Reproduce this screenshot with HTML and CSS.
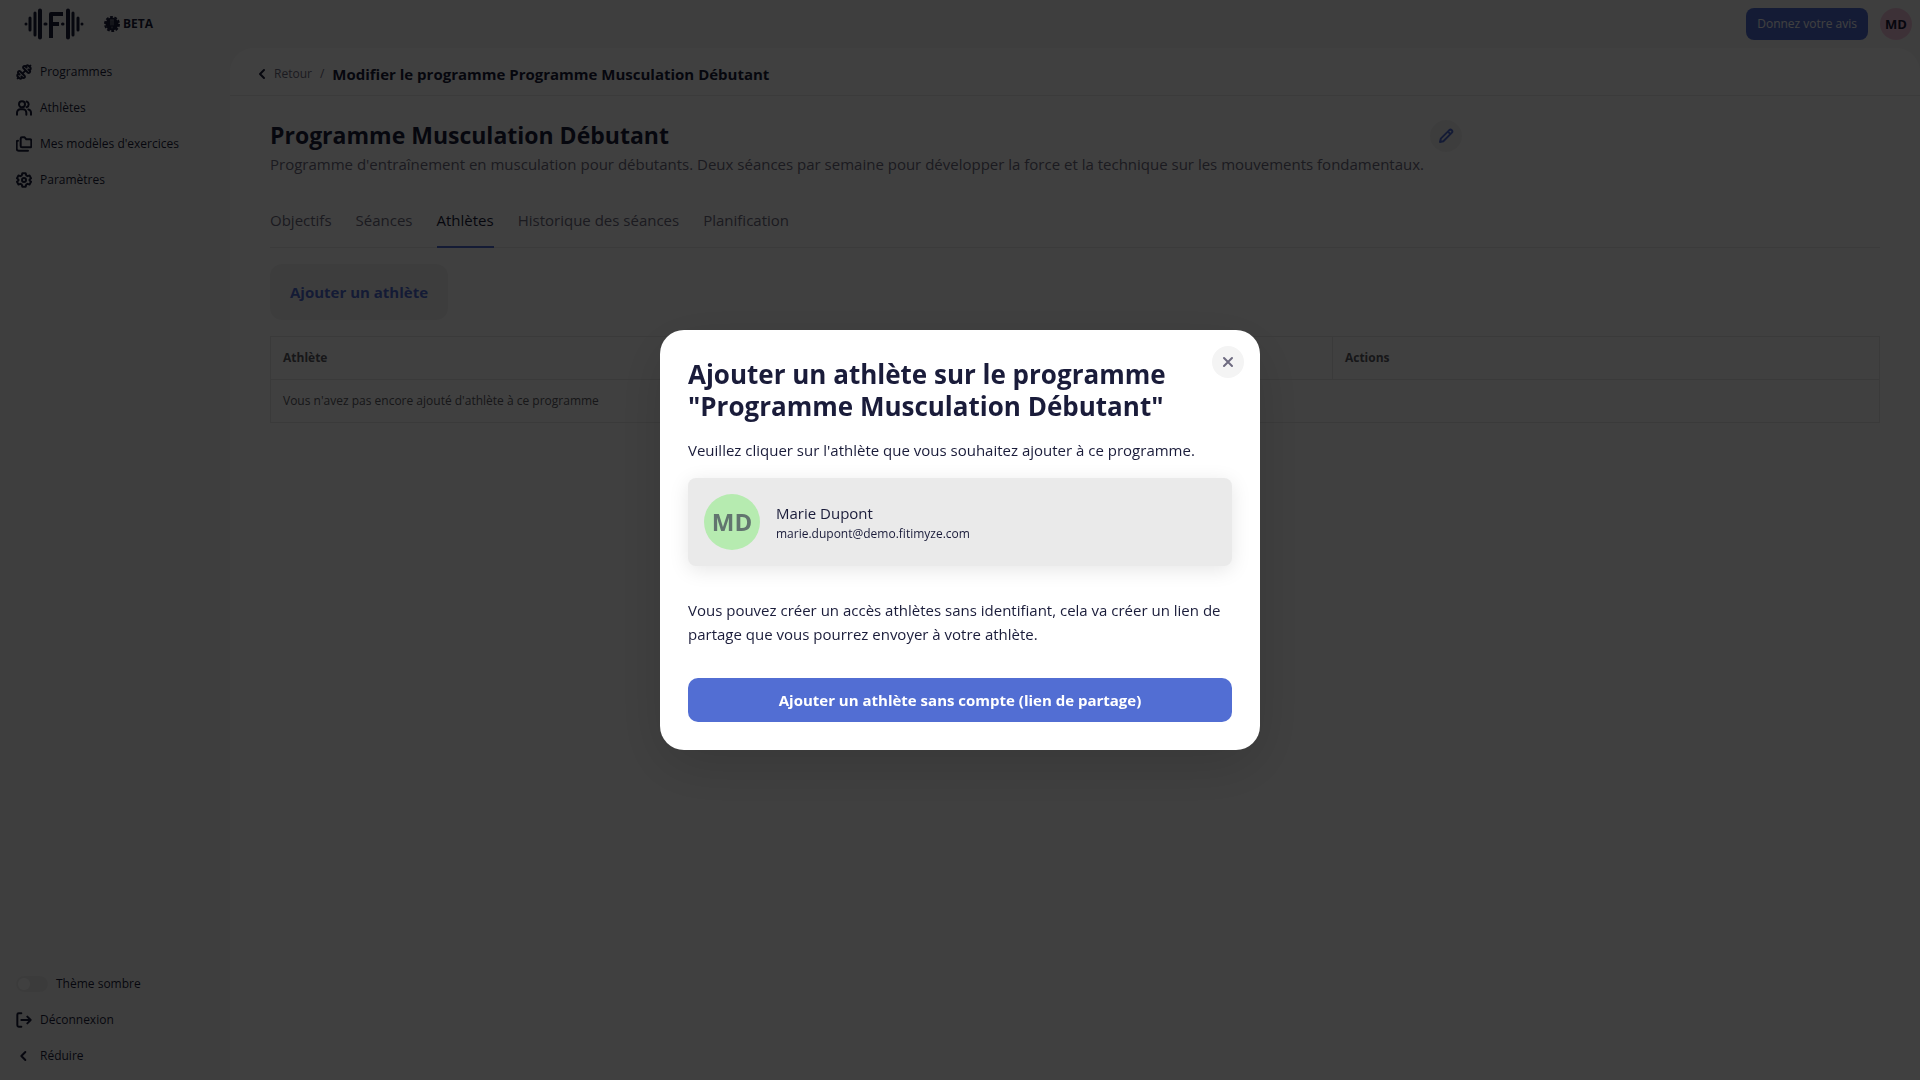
FILE: index.html
```
<!DOCTYPE html>
<html lang="fr">
<head>
<meta charset="utf-8">
<title>Modifier le programme</title>
<meta name="viewport" content="width=device-width, initial-scale=1">
<link rel="stylesheet" href="styles.css">
</head>
<body>
<div class="app">
  <header class="topbar">
    <a class="brand" href="#" aria-label="Accueil">
      <svg class="logo" viewBox="0 0 60 32" fill="none" stroke="currentColor" stroke-linecap="round">
        <path stroke-width="3" d="M2 16h0M58 16h0M21 16h1M38.500 16h.5"/>
        <path stroke-width="3" d="M6 10v12M11 5v22M49 5v22M54 10v12"/>
        <path stroke-width="4" d="M16 2.500v27M44 2.500v27"/>
        <path stroke-width="4" stroke-linecap="butt" d="M27 30V6h12M27 16h8"/>
      </svg>
    </a>
    <span class="beta">
      <svg class="beta-icon" viewBox="0 0 16 16"><circle cx="8" cy="8" r="6.500" fill="currentColor"/><circle cx="8" cy="8" r="7" fill="none" stroke="currentColor" stroke-width="2" stroke-linecap="butt" stroke-dasharray="2.800 1.600"/><path d="M6.500 4h3M7 5v4M9 5v4M8 11v1" stroke="#f8f8f8" stroke-width="1" opacity=".5"/></svg>
      BETA
    </span>
    <button class="feedback" type="button">Donnez votre avis</button>
    <button class="avatar avatar-small" type="button">MD</button>
  </header>

  <nav class="sidebar" aria-label="Navigation principale">
    <ul class="menu">
      <li><a href="#"><svg class="icon" viewBox="0 0 24 24"><path d="M14.400 14.400 9.600 9.600M18.657 21.485a2 2 0 1 1-2.829-2.828l-1.767 1.768a2 2 0 1 1-2.829-2.829l6.364-6.364a2 2 0 1 1 2.829 2.829l-1.768 1.767a2 2 0 1 1 2.828 2.829zM21.500 21.500l-1.400-1.400M3.900 3.900 2.500 2.500M6.404 12.768a2 2 0 1 1-2.829-2.829l1.768-1.767a2 2 0 1 1-2.828-2.829l2.828-2.828a2 2 0 1 1 2.829 2.828l1.767-1.768a2 2 0 1 1 2.829 2.829z" transform="matrix(-1 0 0 1 24 0)"/></svg>Programmes</a></li>
      <li><a href="#"><svg class="icon" viewBox="0 0 24 24"><path d="M1.500 22v-3a5 5 0 0 1 5-5h4a5 5 0 0 1 5 5v3M22.500 22v-3a5 5 0 0 0-4-4.900M16 2.300a4.500 4.500 0 0 1 0 8.500"/><circle cx="9" cy="6.500" r="4.500"/></svg>Athlètes</a></li>
      <li><a href="#"><svg class="icon" viewBox="0 0 24 24"><path d="M9 2h4l2.500 3H21a2 2 0 0 1 2 2v8a2 2 0 0 1-2 2H9a2 2 0 0 1-2-2V4a2 2 0 0 1 2-2zM3 7a2 2 0 0 0-2 2v10a3 3 0 0 0 3 3h14"/></svg>Mes modèles d'exercices</a></li>
      <li><a href="#"><svg class="icon" viewBox="0 0 24 24"><path d="M9.500 2h5l.8 3 2 1.200 3-.9 2.200 4-2.200 2.200v1l2.200 2.200-2.200 4-3-.9-2 1.200-.8 3h-5l-.8-3-2-1.200-3 .9-2.200-4 2.200-2.200v-1L1.500 9.300l2.200-4 3 .9 2-1.200z"/><circle cx="12" cy="12" r="3"/></svg>Paramètres</a></li>
    </ul>
    <ul class="menu">
      <li><label class="theme"><input class="switch" type="checkbox" role="switch">Thème sombre</label></li>
      <li><a href="#"><svg class="icon" viewBox="0 0 24 24"><path d="M8 2H4a2 2 0 0 0-2 2v16a2 2 0 0 0 2 2h4M8 12h14M17 7l5 5-5 5"/></svg>Déconnexion</a></li>
      <li><a href="#"><svg class="icon" viewBox="0 0 24 24"><path d="m14 6-6 6 6 6"/></svg>Réduire</a></li>
    </ul>
  </nav>

  <main class="panel">
    <div class="crumbs">
      <a class="back" href="#"><svg class="chevron" viewBox="0 0 8 12"><path d="M6 2 2 6l4 4"/></svg>Retour</a>
      <span class="slash">/</span>
      <strong class="current">Modifier le programme Programme Musculation Débutant</strong>
    </div>
    <div class="content">
      <div class="intro">
        <div>
          <h1 class="title">Programme Musculation Débutant</h1>
          <p class="description">Programme d'entraînement en musculation pour débutants. Deux séances par semaine pour développer la force et la technique sur les mouvements fondamentaux.</p>
        </div>
        <button class="edit" type="button" aria-label="Modifier"><svg class="icon" viewBox="0 0 24 24"><path d="m3 21 1.200-5L17 3.200a2.700 2.700 0 0 1 3.800 3.800L8 19.800zM15 5.500 18.500 9"/></svg></button>
      </div>
      <nav class="tabs" aria-label="Sections du programme">
        <a href="#">Objectifs</a><a href="#">Séances</a><a class="active" href="#">Athlètes</a><a href="#">Historique des séances</a><a href="#">Planification</a>
      </nav>
      <button class="add" type="button">Ajouter un athlète</button>
      <table class="athletes">
        <thead><tr><th class="wide">Athlète</th><th>Actions</th></tr></thead>
        <tbody><tr><td colspan="2">Vous n'avez pas encore ajouté d'athlète à ce programme</td></tr></tbody>
      </table>
    </div>
  </main>
</div>

<div class="overlay">
  <section class="modal" role="dialog" aria-modal="true" aria-labelledby="modal-title">
    <button class="close" type="button" aria-label="Fermer"><svg class="cross" viewBox="0 0 12 12"><path d="m2 2 8 8M10 2l-8 8"/></svg></button>
    <h2 class="modal-title" id="modal-title">Ajouter un athlète sur le programme "Programme Musculation Débutant"</h2>
    <p class="modal-text">Veuillez cliquer sur l'athlète que vous souhaitez ajouter à ce programme.</p>
    <button class="person" type="button">
      <span class="avatar avatar-large">MD</span>
      <span class="identity"><span class="name">Marie Dupont</span><span class="email">marie.dupont@demo.fitimyze.com</span></span>
    </button>
    <p class="modal-text">Vous pouvez créer un accès athlètes sans identifiant, cela va créer un lien de partage que vous pourrez envoyer à votre athlète.</p>
    <button class="share" type="button">Ajouter un athlète sans compte (lien de partage)</button>
  </section>
</div>
</body>
</html>
```
FILE: styles.css
```
* { box-sizing: border-box; margin: 0; padding: 0; }
body { font: 15px/24px "Open Sans", "Noto Sans", sans-serif; color: #1a1c3a; background: #f8f8f8; }
button { font: inherit; border: 0; cursor: pointer; }
a { color: inherit; text-decoration: none; }
ul { list-style: none; }
svg { display: block; flex: none; fill: none; stroke: currentColor; stroke-linecap: round; stroke-linejoin: round; }

.app { display: grid; grid-template: 48px 1fr / 230px 1fr; min-height: 100vh; }
.topbar { grid-column: 1 / -1; display: flex; align-items: center; padding: 0 8px 0 24px; }
.logo { width: 60px; height: 32px; }
.beta { display: flex; align-items: center; gap: 3px; margin: 0 auto 0 20px; font-size: 12px; font-weight: 700; }
.beta-icon { width: 16px; height: 16px; stroke: none; }
.feedback { height: 32px; padding: 0 11px; border-radius: 8px; background: #526ed3; color: #fff; font-size: 12px; }
.avatar { display: grid; place-items: center; flex: none; border-radius: 50%; font-weight: 700; }
.avatar-small { width: 32px; height: 32px; margin-left: 12px; background: #f4c4dc; color: #1a1c3a; font-size: 13px; }
.avatar-large { width: 56px; height: 56px; background: #b6ebb0; color: #62756f; font-size: 24px; }

.sidebar { display: flex; flex-direction: column; justify-content: space-between; padding: 6px 16px; font-size: 12px; }
.menu a, .theme { display: flex; align-items: center; gap: 8px; height: 36px; }
.icon { width: 16px; height: 16px; stroke-width: 3; }
.switch { appearance: none; display: flex; width: 32px; height: 16px; padding: 2px; border-radius: 8px; background: #ececec; }
.switch::before { content: ""; width: 12px; height: 12px; border-radius: 50%; background: #fff; }

.panel { background: #fff; border-radius: 24px 24px 0 0; min-width: 0; }
.crumbs { display: flex; align-items: center; height: 48px; padding: 4px 28px 0; border-bottom: 1px solid #ececec; }
.back { display: flex; align-items: center; gap: 8px; color: #6e6b80; font-size: 12px; }
.chevron { width: 8px; height: 12px; stroke-width: 2; color: #1a1c3a; }
.slash { margin: 0 8px; color: #6e6b80; font-size: 12px; }
.content { padding: 24px 40px; }
.intro { display: flex; align-items: flex-start; gap: 6px; }
.title { margin-bottom: 2px; font-size: 23px; line-height: 30px; }
.description { color: #6e6b80; }
.edit { display: grid; place-items: center; width: 32px; height: 32px; border-radius: 50%; background: #f4f4f4; color: #526ed3; }
.tabs { display: flex; gap: 24px; margin: 18px 0 16px; border-bottom: 1px solid #ececec; color: #6e6b80; }
.tabs a { padding: 14px 0; border-bottom: 2px solid transparent; margin-bottom: -1px; }
.tabs .active { color: #1a1c3a; border-color: #526ed3; }
.add { height: 56px; padding: 0 20px; border-radius: 12px; background: #f4f4f4; color: #526ed3; font-weight: 700; }
.athletes { width: 100%; margin-top: 16px; border-collapse: collapse; font-size: 12px; color: #5c5c64; }
.athletes th, .athletes td { height: 43px; padding: 0 12px; border: 1px solid #e8e8e8; text-align: left; }
.wide { width: 66%; }

.overlay { position: fixed; inset: 0; display: grid; place-items: center; background: rgba(0, 0, 0, .75); }
.modal { position: relative; width: 600px; max-width: 100%; padding: 28px; border-radius: 24px; background: #fff; box-shadow: 0 16px 56px rgba(0, 0, 0, .15); }
.close { position: absolute; top: 16px; right: 16px; display: grid; place-items: center; width: 32px; height: 32px; border-radius: 50%; background: #f4f4f4; color: #6e6b80; }
.cross { width: 12px; height: 12px; stroke-width: 2; }
.modal-title { margin-bottom: 16px; font-size: 26px; line-height: 32px; }
.person { display: flex; align-items: center; gap: 16px; width: 100%; margin: 16px 0 32px; padding: 16px; border-radius: 8px; background: #eaeaea; color: #1a1c3a; text-align: left; box-shadow: 0 4px 20px rgba(0, 0, 0, .1); }
.identity { display: grid; padding-top: 2px; }
.name { line-height: 22px; }
.email { font-size: 12px; line-height: 20px; }
.share { width: 100%; height: 44px; margin-top: 32px; border-radius: 10px; background: #526ed3; color: #fff; font-weight: 700; }
```
